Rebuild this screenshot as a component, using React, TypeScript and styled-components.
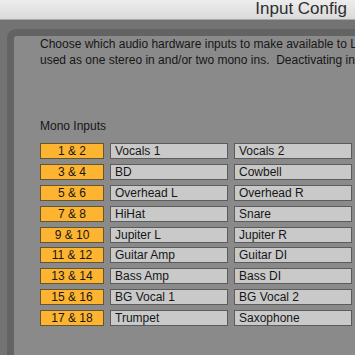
import React from 'react';
import styled, { createGlobalStyle } from 'styled-components';

const GlobalStyle = createGlobalStyle`
  html, body {
    margin: 0;
    padding: 0;
    width: 355px;
    height: 355px;
    overflow: hidden;
    background: #737373;
  }
  * {
    box-sizing: border-box;
  }
`;

const Window = styled.div`
  width: 355px;
  height: 355px;
  display: flex;
  flex-direction: column;
  font-family: 'Liberation Sans', Arial, sans-serif;
  overflow: hidden;
`;

const TitleBar = styled.div`
  height: 20px;
  flex: none;
  display: flex;
  justify-content: flex-end;
  align-items: center;
  padding-right: 8px;
  background: linear-gradient(#ededed, #dadada);
  border-bottom: 1px solid #a9a9a9;
`;

const Title = styled.div`
  font-size: 17px;
  color: #2e2e2e;
  line-height: 20px;
  margin-top: -1px;
`;

const Backdrop = styled.div`
  flex: 1;
  background: #737373;
  padding: 9px 0 0 7px;
  display: flex;
`;

const Panel = styled.div`
  flex: 1;
  background: #8a8a8a;
  border-top: 7px solid #636363;
  border-left: 7px solid #636363;
  border-top-left-radius: 9px;
  padding: 0 0 0 26px;
  overflow: hidden;
`;

const Description = styled.div`
  font-size: 12px;
  line-height: 16px;
  color: #161616;
  white-space: nowrap;
`;

const SectionLabel = styled.div`
  margin-top: 50px;
  font-size: 12px;
  line-height: 16px;
  color: #161616;
`;

const Rows = styled.div`
  margin-top: 9px;
  display: flex;
  flex-direction: column;
  gap: 4.875px;
`;

const Row = styled.div`
  display: flex;
  gap: 6px;
`;

const Cell = styled.div<{ $pair?: boolean }>`
  height: 16px;
  width: ${(p) => (p.$pair ? '64px' : '118px')};
  flex: none;
  border: 1px solid ${(p) => (p.$pair ? '#66552f' : '#5c5c5c')};
  background: ${(p) => (p.$pair ? '#fdb431' : '#c9c9c9')};
  color: #161616;
  font-size: 12px;
  line-height: 14px;
  text-align: ${(p) => (p.$pair ? 'center' : 'left')};
  padding-left: ${(p) => (p.$pair ? '0' : '4px')};
  white-space: nowrap;
  overflow: hidden;
`;

const inputs: [string, string, string][] = [
  ['1 & 2', 'Vocals 1', 'Vocals 2'],
  ['3 & 4', 'BD', 'Cowbell'],
  ['5 & 6', 'Overhead L', 'Overhead R'],
  ['7 & 8', 'HiHat', 'Snare'],
  ['9 & 10', 'Jupiter L', 'Jupiter R'],
  ['11 & 12', 'Guitar Amp', 'Guitar DI'],
  ['13 & 14', 'Bass Amp', 'Bass DI'],
  ['15 & 16', 'BG Vocal 1', 'BG Vocal 2'],
  ['17 & 18', 'Trumpet', 'Saxophone'],
];

const App: React.FC = () => {
  return (
    <>
      <GlobalStyle />
      <Window>
        <TitleBar>
          <Title>Input Config</Title>
        </TitleBar>
        <Backdrop>
          <Panel>
            <Description>
              Choose which audio hardware inputs to make available to Live. Each input pair can be
            </Description>
            <Description>
              used as one stereo in and/or two mono ins.&nbsp; Deactivating inputs reduces the CPU load.
            </Description>
            <SectionLabel>Mono Inputs</SectionLabel>
            <Rows>
              {inputs.map(([pair, left, right]) => (
                <Row key={pair}>
                  <Cell $pair>{pair}</Cell>
                  <Cell>{left}</Cell>
                  <Cell>{right}</Cell>
                </Row>
              ))}
            </Rows>
          </Panel>
        </Backdrop>
      </Window>
    </>
  );
};

export default App;
